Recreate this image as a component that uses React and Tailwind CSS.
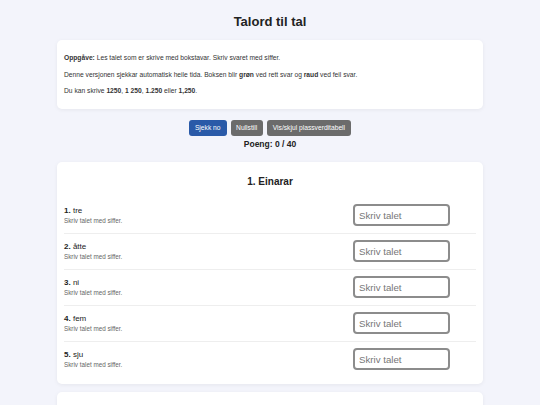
const ROWS = [
  { n: 1, word: 'tre' },
  { n: 2, word: 'åtte' },
  { n: 3, word: 'ni' },
  { n: 4, word: 'fem' },
  { n: 5, word: 'sju' },
];

const TIARAR = [
  { n: 6, word: 'tjue' },
  { n: 7, word: 'førti' },
];

function Row({ n, word, last }) {
  return (
    <div className={`flex items-center justify-between pt-[6px] pb-[7px] ${last ? '' : 'border-b border-[#eeeeee]'}`}>
      <div className="flex flex-col">
        <span className="text-[8px] leading-[9px] text-[#222]">
          <b>{n}.</b> {word}
        </span>
        <span className="text-[6.3px] leading-[8px] mt-[2px] text-[#666]">Skriv talet med siffer.</span>
      </div>
      <input
        type="text"
        placeholder="Skriv talet"
        className="mr-[26px] w-[97px] h-[22px] border-2 border-[#8c8c8c] rounded-[4px] px-[4px] text-[9.7px] text-[#222] placeholder:text-[#777] bg-white outline-none"
      />
    </div>
  );
}

function Section({ title, rows }) {
  return (
    <div className="bg-white rounded-[5px] shadow-[0_1px_4px_rgba(0,0,0,0.06)] px-[7px] pt-[14px] pb-[7px]">
      <h2 className="text-center text-[10px] leading-[12px] font-bold text-[#222] mb-[10px]">{title}</h2>
      {rows.map((r, i) => (
        <Row key={r.n} {...r} last={i === rows.length - 1} />
      ))}
    </div>
  );
}

export default function App() {
  return (
    <div className="min-h-screen bg-[#f3f4fb] font-['Liberation_Sans',Arial,sans-serif] text-[#333]">
      <div className="w-[426px] mx-auto pt-[14px] pb-4">
        <h1 className="text-center text-[13px] leading-[16px] font-bold text-[#222] mb-[10px]">Talord til tal</h1>

        <div className="bg-white rounded-[5px] shadow-[0_1px_4px_rgba(0,0,0,0.06)] px-[7px] py-[14px] text-[6.7px] leading-[8px] text-[#333] flex flex-col gap-[8.5px]">
          <p>
            <b>Oppgåve:</b> Les talet som er skrive med bokstavar. Skriv svaret med siffer.
          </p>
          <p>
            Denne versjonen sjekkar automatisk heile tida. Boksen blir <b>grøn</b> ved rett svar og <b>raud</b> ved feil svar.
          </p>
          <p>
            Du kan skrive <b>1250</b>, <b>1 250</b>, <b>1.250</b> eller <b>1,250</b>.
          </p>
        </div>

        <div className="flex justify-center gap-[4px] mt-[11px]">
          <button className="h-[16px] px-[6px] rounded-[3px] bg-[#2a5aa8] text-white text-[6.7px]">Sjekk no</button>
          <button className="h-[16px] px-[5.5px] rounded-[3px] bg-[#6b6b6b] text-white text-[6.7px]">Nullstill</button>
          <button className="h-[16px] px-[6px] rounded-[3px] bg-[#6b6b6b] text-white text-[6.7px]">Vis/skjul plassverditabell</button>
        </div>

        <p className="text-center text-[8.5px] leading-[10px] font-bold text-[#222] mt-[3px] mb-[13px]">Poeng: 0 / 40</p>

        <div className="flex flex-col gap-[8px]">
          <Section title="1. Einarar" rows={ROWS} />
          <Section title="2. Tiarar" rows={TIARAR} />
        </div>
      </div>
    </div>
  );
}
